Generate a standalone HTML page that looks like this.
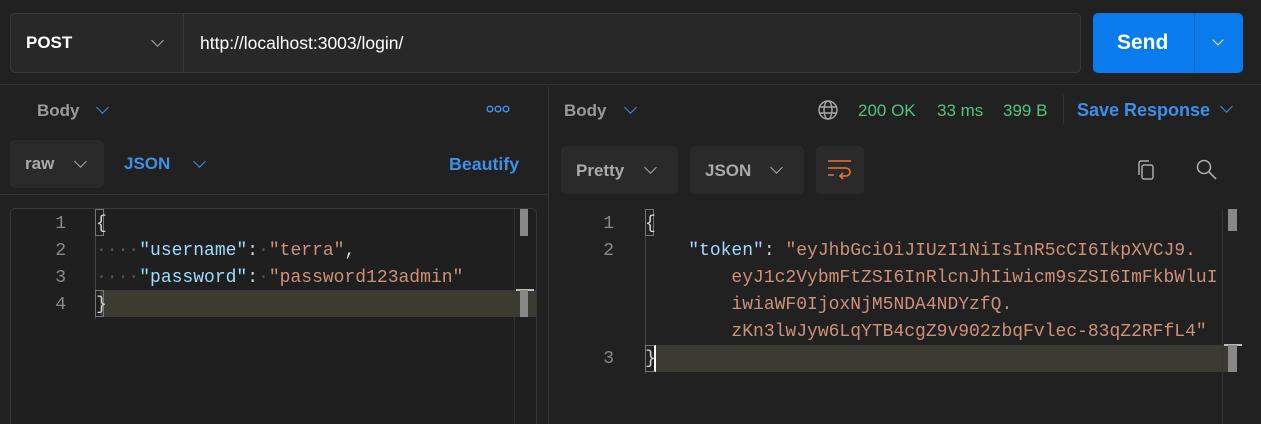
<!DOCTYPE html><html><head><style>
*{margin:0;padding:0;box-sizing:border-box}
html,body{width:1261px;height:424px;overflow:hidden}
body{background:#212121;font-family:"Liberation Sans",sans-serif;position:relative;color:#fff}
.a{position:absolute}
.mono{font-family:"Liberation Mono",monospace;font-size:18px;white-space:pre}
.chev{position:absolute;width:9px;height:9px;border-right:1.6px solid currentColor;border-bottom:1.6px solid currentColor;transform:rotate(45deg)}
.ln{color:#8a8a8a;text-align:right;width:20px}
.k{color:#9cdcfe}.s{color:#ce9178}.p{color:#d4d4d4}.d{color:#555}
</style></head><body>
<div class="a" style="left:0;top:0;width:1261px;height:85px;background:#212121;border-bottom:1px solid #333"></div>
<div class="a" style="left:10px;top:13px;width:1071px;height:60px;background:#282828;border:1px solid #383838;border-radius:5px"></div>
<div class="a" style="left:183px;top:14px;width:1px;height:58px;background:#383838"></div>
<div class="a" style="left:26px;top:33px;font-size:17px;font-weight:bold;color:#fff">POST</div>
<div class="chev" style="left:153px;top:36px;color:#aaa"></div>
<div class="a" style="left:200px;top:33px;font-size:17.5px;color:#fff">http://localhost:3003/login/</div>
<div class="a" style="left:1093px;top:13px;width:150px;height:60px;background:#097bed;border-radius:5px"></div>
<div class="a" style="left:1194px;top:13px;width:1px;height:60px;background:#0a68c6"></div>
<div class="a" style="left:1117px;top:31px;font-size:21px;font-weight:bold;color:#fff">Send</div>
<div class="chev" style="left:1214px;top:36px;color:#fff;width:8px;height:8px"></div>
<div class="a" style="left:548px;top:86px;width:1px;height:338px;background:#333"></div>
<!-- left -->
<div class="a" style="left:37px;top:101px;font-size:17px;font-weight:bold;color:#9a9a9a">Body</div>
<div class="chev" style="left:98px;top:103px;color:#3d8fe8"></div>
<svg class="a" style="left:486px;top:104px" width="24" height="10" viewBox="0 0 24 10" fill="none" stroke="#3d8fe8" stroke-width="1.5"><circle cx="4" cy="5" r="2.8"/><circle cx="12" cy="5" r="2.8"/><circle cx="20" cy="5" r="2.8"/></svg>
<div class="a" style="left:10px;top:140px;width:94px;height:48px;background:#2a2a2a;border-radius:5px"></div>
<div class="a" style="left:25px;top:154px;font-size:17px;font-weight:bold;color:#aaa">raw</div>
<div class="chev" style="left:76px;top:157px;color:#aaa"></div>
<div class="a" style="left:124px;top:154px;font-size:17px;font-weight:bold;color:#3d8fe8">JSON</div>
<div class="chev" style="left:195px;top:157px;color:#3d8fe8"></div>
<div class="a" style="left:449px;top:154px;font-size:17.8px;font-weight:bold;color:#3d8fe8">Beautify</div>
<div class="a" style="left:0;top:194px;width:548px;height:1px;background:#333"></div>
<div class="a" style="left:10px;top:208px;width:527px;height:216px;border:1px solid #383838;border-bottom:none;border-radius:5px 5px 0 0;background:#1f1f1f"></div>
<div class="a" style="left:514px;top:209px;width:1px;height:215px;background:#333"></div>
<div class="a" style="left:520px;top:209px;width:8px;height:27px;background:#888"></div>
<div class="a" style="left:100px;top:290px;width:436px;height:27px;background:#3b3b31"></div>
<div class="a" style="left:516px;top:289px;width:18px;height:2px;background:#bbb"></div>
<div class="a" style="left:520px;top:290px;width:8px;height:27px;background:#888"></div>
<div class="a" style="left:95px;top:209px;width:1px;height:110px;background:#444"></div>
<div class="a" style="left:95px;top:209px;width:9px;height:27px;border:1px solid #777"></div>
<div class="a" style="left:95px;top:290px;width:9px;height:27px;border:1px solid #777"></div>
<div class="a mono ln" style="left:46px;top:211px;line-height:27px">1
2
3
4</div>
<div class="a mono p" style="left:96px;top:211px;line-height:27px">{
<span class="d">····</span><span class="k">"username"</span>:<span class="d">·</span><span class="s">"terra"</span>,
<span class="d">····</span><span class="k">"password"</span>:<span class="d">·</span><span class="s">"password123admin"</span>
}</div>
<!-- right -->
<div class="a" style="left:564px;top:101px;font-size:17px;font-weight:bold;color:#9a9a9a">Body</div>
<div class="chev" style="left:626px;top:103px;color:#3d8fe8"></div>
<svg class="a" style="left:817px;top:99px" width="22" height="22" viewBox="0 0 22 22" fill="none" stroke="#aaa" stroke-width="1.4"><circle cx="11" cy="11" r="9"/><ellipse cx="11" cy="11" rx="4" ry="9"/><path d="M2 8h18M2 14h18"/></svg>
<div class="a" style="left:858px;top:101px;font-size:17px;color:#4fc57e">200 OK</div>
<div class="a" style="left:937px;top:101px;font-size:17px;color:#4fc57e">33 ms</div>
<div class="a" style="left:1003px;top:101px;font-size:17px;color:#4fc57e">399 B</div>
<div class="a" style="left:1063px;top:95px;width:1px;height:30px;background:#333"></div>
<div class="a" style="left:1077px;top:100px;font-size:18px;font-weight:bold;color:#3d8fe8">Save Response</div>
<div class="chev" style="left:1222px;top:102px;color:#3d8fe8"></div>
<div class="a" style="left:561px;top:146px;width:117px;height:48px;background:#2a2a2a;border-radius:5px"></div>
<div class="a" style="left:576px;top:161px;font-size:17px;font-weight:bold;color:#aaa">Pretty</div>
<div class="chev" style="left:646px;top:163px;color:#aaa"></div>
<div class="a" style="left:690px;top:146px;width:114px;height:48px;background:#2a2a2a;border-radius:5px"></div>
<div class="a" style="left:705px;top:161px;font-size:17px;font-weight:bold;color:#aaa">JSON</div>
<div class="chev" style="left:772px;top:163px;color:#aaa"></div>
<div class="a" style="left:816px;top:146px;width:48px;height:48px;background:#2a2a2a;border-radius:5px"></div>
<svg class="a" style="left:826px;top:159px" width="28" height="24" viewBox="0 0 28 24" fill="none" stroke="#e8743b" stroke-width="1.6"><path d="M2 2h23M2 9h18a4 4 0 0 1 0 8h-6M17 14l-3 3 3 3M2 16h6"/></svg>
<svg class="a" style="left:1136px;top:159px" width="22" height="24" viewBox="0 0 22 24" fill="none" stroke="#aaa" stroke-width="1.5"><rect x="6" y="6" width="11" height="14" rx="2"/><path d="M3 16V4a2 2 0 0 1 2-2h8"/></svg>
<svg class="a" style="left:1195px;top:158px" width="24" height="24" viewBox="0 0 24 24" fill="none" stroke="#aaa" stroke-width="1.6"><circle cx="9" cy="9" r="6.5"/><path d="M14 14l7 7"/></svg>
<div class="a" style="left:656px;top:345px;width:572px;height:27px;background:#3b3b31"></div>
<div class="a" style="left:1222px;top:209px;width:1px;height:215px;background:#333"></div>
<div class="a" style="left:1228px;top:209px;width:9px;height:22px;background:#888"></div>
<div class="a" style="left:1224px;top:344px;width:18px;height:2px;background:#bbb"></div>
<div class="a" style="left:1228px;top:345px;width:9px;height:27px;background:#888"></div>
<div class="a" style="left:645px;top:209px;width:1px;height:165px;background:#444"></div>
<div class="a" style="left:645px;top:209px;width:9px;height:27px;border:1px solid #777"></div>
<div class="a" style="left:645px;top:345px;width:11px;height:27px;border:1px solid #777;border-right:2px solid #fff"></div>
<div class="a mono ln" style="left:594px;top:211px;line-height:27px">1
2



3</div>
<div class="a mono p" style="left:645px;top:211px;line-height:27px">{
    <span class="k">"token"</span>: <span class="s">"eyJhbGciOiJIUzI1NiIsInR5cCI6IkpXVCJ9.</span>
<span class="s">        eyJ1c2VybmFtZSI6InRlcnJhIiwicm9sZSI6ImFkbWluI</span>
<span class="s">        iwiaWF0IjoxNjM5NDA4NDYzfQ.</span>
<span class="s">        zKn3lwJyw6LqYTB4cgZ9v902zbqFvlec-83qZ2RFfL4"</span>
}</div>
</body></html>
